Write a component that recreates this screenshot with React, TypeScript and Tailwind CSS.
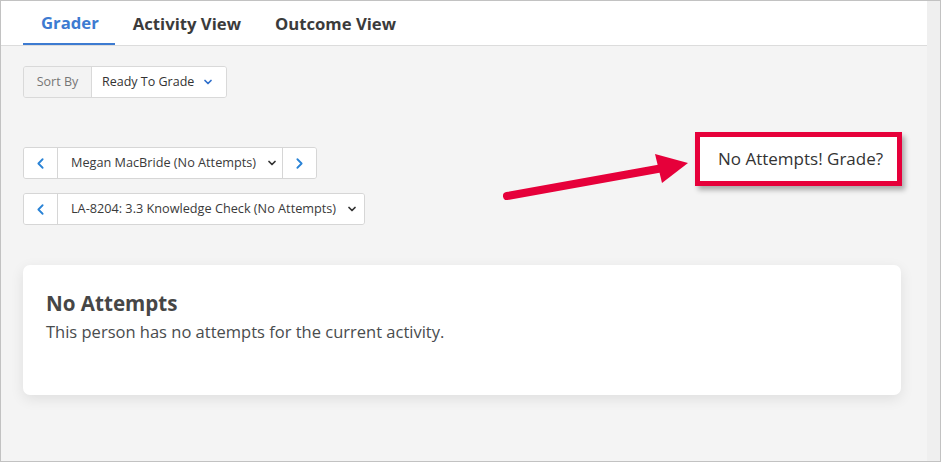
import { ChevronDown, ChevronLeft, ChevronRight } from "lucide-react";

const tabs = ["Grader", "Activity View", "Outcome View"];

function Caret({ className = "" }: { className?: string }) {
  return <ChevronDown size={12} strokeWidth={3.5} className={className} />;
}

function NavButton({ dir }: { dir: "left" | "right" }) {
  const Icon = dir === "left" ? ChevronLeft : ChevronRight;
  return (
    <button className="flex h-full w-[33px] items-center justify-center bg-white">
      <Icon size={17} strokeWidth={2.6} className="text-[#2a83d6]" />
    </button>
  );
}

export default function App() {
  return (
    <div className="relative flex h-[462px] w-[941px] overflow-hidden border border-[#c2c2c2] bg-[#f4f4f4] font-['Open_Sans',sans-serif] text-[#494c4e]">
      <div className="flex flex-1 flex-col">
        {/* Tab bar */}
        <nav className="flex h-[45px] shrink-0 border-b border-[#dcdcdc] bg-white pl-[22px]">
          {tabs.map((t, i) => (
            <div
              key={t}
              className={`flex items-center pl-[18px] pr-[16px] pt-[2px] text-[16.7px] font-bold ${
                i === 0 ? "border-b-2 border-[#3d7bd1] text-[#3d7bd1]" : "text-[#3b3b3b]"
              }`}
            >
              {t}
            </div>
          ))}
        </nav>

        <div className="flex flex-col items-start pl-[22px] pr-[26px]">
          {/* Sort selector */}
          <div className="mt-[20px] flex h-[32px] overflow-hidden rounded-[3px] border border-[#d9d9d9] text-[12.5px]">
            <div className="flex w-[68px] items-center justify-center border-r border-[#d9d9d9] bg-[#f3f3f3] text-[#767676]">
              Sort By
            </div>
            <div className="flex w-[134px] items-center gap-[8px] bg-white pl-[10px] text-[#333]">
              Ready To Grade
              <Caret className="text-[#2f6fcb]" />
            </div>
          </div>

          {/* Learner picker */}
          <div className="mt-[49px] flex h-[32px] overflow-hidden rounded-[3px] border border-[#d6d6d6] text-[12.7px]">
            <NavButton dir="left" />
            <div className="flex w-[226px] items-center gap-[10px] border-x border-[#d6d6d6] bg-white pl-[13px] text-[#3a3a3a]">
              Megan MacBride (No Attempts)
              <Caret className="text-[#333]" />
            </div>
            <NavButton dir="right" />
          </div>

          {/* Activity picker */}
          <div className="mt-[14px] flex h-[32px] overflow-hidden rounded-[3px] border border-[#d6d6d6] text-[12.7px]">
            <NavButton dir="left" />
            <div className="flex w-[307px] items-center gap-[10px] border-l border-[#d6d6d6] bg-white pl-[13px] text-[#3a3a3a]">
              LA-8204: 3.3 Knowledge Check (No Attempts)
              <Caret className="text-[#333]" />
            </div>
          </div>

          {/* Empty state card */}
          <div className="mt-[40px] h-[130px] w-full rounded-[7px] bg-white px-[23px] pt-[24px] shadow-[0_4px_14px_rgba(0,0,0,0.09)]">
            <h2 className="text-[20.6px] font-bold leading-[29px] text-[#464646]">No Attempts</h2>
            <p className="mt-[2px] text-[16.5px] leading-[24px] text-[#494c4e]">
              This person has no attempts for the current activity.
            </p>
          </div>
        </div>
      </div>

      {/* Scrollbar track */}
      <div className="w-[13px] shrink-0 bg-[#efefef]" />

      {/* Callout arrow */}
      <svg
        className="pointer-events-none absolute left-[490px] top-[140px]"
        width="210"
        height="70"
        viewBox="0 0 210 70"
      >
        <line x1="16" y1="55" x2="172" y2="27" stroke="#e6003a" strokeWidth="8" strokeLinecap="round" />
        <polygon points="164,13 197,22 171,42" fill="#e6003a" />
      </svg>

      {/* Callout box */}
      <div className="absolute left-[694px] top-[131px] flex h-[54px] w-[207px] items-center border-[5px] border-[#e6003a] bg-white pl-[18px] text-[17px] text-[#333] shadow-[3px_4px_5px_rgba(0,0,0,0.3)]">
        No Attempts! Grade?
      </div>
    </div>
  );
}
